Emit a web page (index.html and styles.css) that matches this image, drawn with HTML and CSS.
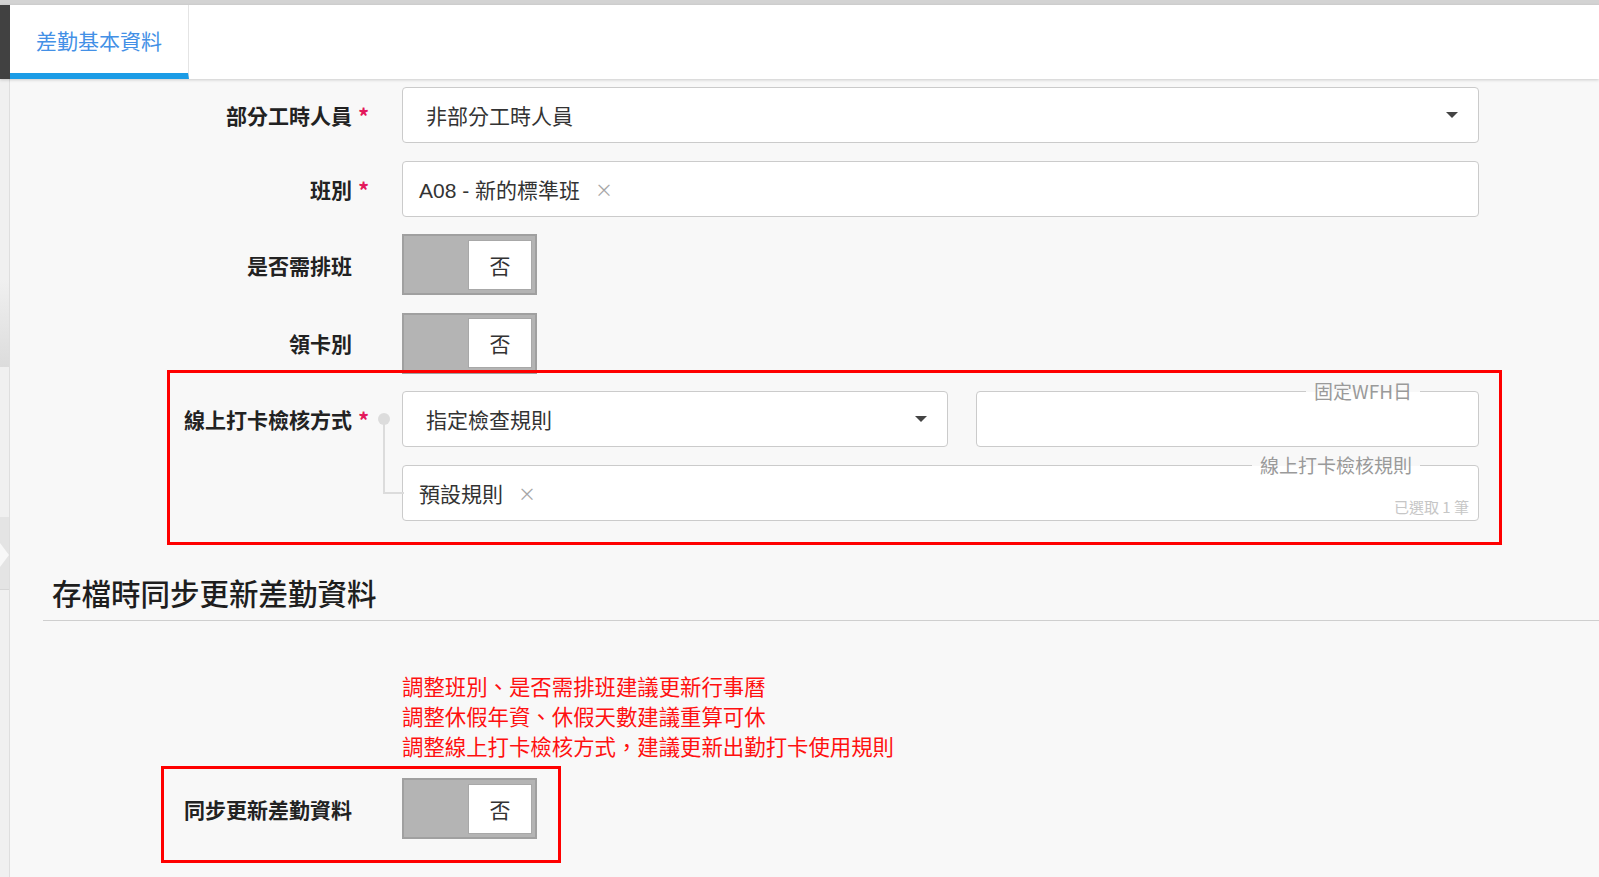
FILE: index.html
```html
<!DOCTYPE html>
<html lang="zh-Hant">
<head>
<meta charset="utf-8">
<title>差勤基本資料</title>
<link rel="stylesheet" href="styles.css">
</head>
<body>
<div class="topstrip"></div>
<header class="header">
  <div class="dark"></div>
  <nav class="tabs">
    <div class="tab active">差勤基本資料</div>
  </nav>
</header>
<div class="main">
  <aside class="edge">
    <div class="shade1"></div>
    <div class="shade2"></div>
  </aside>
  <div class="content">
    <div class="form">
      <div class="row">
        <div class="label">部分工時人員<span class="req">*</span></div>
        <div class="select"><span>非部分工時人員</span><i class="caret"></i></div>
      </div>
      <div class="row">
        <div class="label">班別<span class="req">*</span></div>
        <div class="tagbox"><span class="tag">A08 - 新的標準班</span><span class="x">×</span></div>
      </div>
      <div class="row">
        <div class="label">是否需排班</div>
        <div class="toggle"><span class="knob">否</span></div>
      </div>
      <div class="row">
        <div class="label">領卡別</div>
        <div class="toggle"><span class="knob">否</span></div>
      </div>
      <div class="group">
        <div class="label g-label">線上打卡檢核方式<span class="req">*</span></div>
        <div class="pair">
          <div class="select method"><span>指定檢查規則</span><i class="caret"></i></div>
          <div class="field wfh"><span class="legend">固定WFH日</span></div>
        </div>
        <div class="field rules">
          <span class="legend">線上打卡檢核規則</span>
          <span class="tag">預設規則</span><span class="x">×</span>
          <span class="count">已選取 1 筆</span>
        </div>
        <svg class="connector" width="28" height="84" viewBox="0 0 28 84">
          <circle cx="8" cy="8" r="6" fill="#dcdcdc"/>
          <path d="M8 8 V82 H28" fill="none" stroke="#dcdcdc" stroke-width="2"/>
        </svg>
      </div>
    </div>
    <section class="sync">
      <h2 class="sync-title">存檔時同步更新差勤資料</h2>
      <div class="notes">
        <div>調整班別、是否需排班建議更新行事曆</div>
        <div>調整休假年資、休假天數建議重算可休</div>
        <div>調整線上打卡檢核方式，建議更新出勤打卡使用規則</div>
      </div>
      <div class="row sync-row">
        <div class="label">同步更新差勤資料</div>
        <div class="toggle"><span class="knob">否</span></div>
      </div>
    </section>
  </div>
</div>
</body>
</html>
```

FILE: styles.css
```css
* { box-sizing: border-box; }

body {
  margin: 0;
  width: 1599px;
  height: 877px;
  overflow: hidden;
  background: #f8f8f8;
  font-family: "Noto Sans CJK TC", "Noto Sans", sans-serif;
  color: #333;
}

.topstrip {
  height: 5px;
  background: #d3d3d3;
}

.header {
  display: flex;
  height: 74px;
  position: relative;
  z-index: 2;
  box-shadow: 0 1px 3px rgba(0, 0, 0, 0.18);
}

.dark {
  width: 10px;
  background: #414141;
}

.tabs {
  flex: 1;
  display: flex;
  background: #fff;
}

.tab {
  width: 179px;
  height: 74px;
  display: flex;
  align-items: center;
  padding: 2px 0 0 26px;
  font-size: 21px;
  color: #4390e6;
  border-right: 1px solid #e4e4e4;
  border-bottom: 6px solid #1b9ce6;
}

.main {
  display: flex;
  height: 798px;
}

.edge {
  width: 10px;
  flex: none;
  background: #f0f0f0;
  border-right: 1px solid #dedede;
  position: relative;
}

.shade1 {
  position: absolute;
  left: 0;
  top: 200px;
  width: 9px;
  height: 88px;
  background: linear-gradient(#f0f0f0, #dcdcdc);
}

.shade2 {
  position: absolute;
  left: 0;
  top: 438px;
  width: 9px;
  height: 73px;
  background: #e4e4e4;
  border-bottom: 1px solid #d6d6d6;
}

.shade2::after {
  content: "";
  position: absolute;
  left: 0;
  top: 26px;
  border-top: 12px solid transparent;
  border-bottom: 12px solid transparent;
  border-left: 9px solid #f8f8f8;
}

.content {
  flex: 1;
  padding-top: 8px;
}

.form {
  display: flex;
  flex-direction: column;
  gap: 17.6px;
}

.row {
  display: grid;
  grid-template-columns: 392px 1077px;
  align-items: center;
}

.label {
  display: flex;
  justify-content: flex-end;
  align-items: center;
  padding-right: 50px;
  font-size: 21px;
  font-weight: 700;
  color: #222;
  white-space: nowrap;
}

.req {
  color: #e3175b;
  font-size: 22px;
  margin-left: 6px;
  margin-right: -16px;
  width: 10px;
}

.select,
.tagbox,
.field {
  height: 56px;
  background: #fff;
  border: 1px solid #cbcbcb;
  border-radius: 4px;
  display: flex;
  align-items: center;
  font-size: 21px;
  color: #333;
}

.select {
  padding: 0 20px 0 23px;
  justify-content: space-between;
}

.caret {
  width: 0;
  height: 0;
  border-left: 6px solid transparent;
  border-right: 6px solid transparent;
  border-top: 6px solid #444;
}

.tagbox {
  padding: 0 16px;
}

.tag {
  color: #333;
  font-family: "Liberation Sans", "Noto Sans CJK TC", sans-serif;
}

.x {
  margin-left: 15px;
  font-size: 18px;
  color: #a6a6a6;
}

.toggle {
  width: 135px;
  height: 61px;
  background: #b4b4b4;
  border: 2px solid #a0a0a0;
  display: flex;
  justify-content: flex-end;
  align-items: center;
  padding: 0 3px;
}

.knob {
  width: 64px;
  height: 50px;
  background: #fff;
  border: 1px solid #a8a8a8;
  display: flex;
  align-items: center;
  justify-content: center;
  font-size: 21px;
  color: #333;
}

.group {
  position: relative;
  display: grid;
  grid-template-columns: 392px 1077px;
  grid-template-rows: 56px 56px;
  row-gap: 18px;
  align-items: center;
}

.group::after {
  content: "";
  position: absolute;
  top: -21px;
  left: 157px;
  width: 1329px;
  height: 169px;
  border: 3px solid #ff0000;
  pointer-events: none;
}

.g-label {
  grid-column: 1;
  grid-row: 1;
}

.pair {
  grid-column: 2;
  grid-row: 1;
  display: flex;
  gap: 28px;
}

.method,
.wfh {
  flex: 1 1 0;
  min-width: 0;
}

.field {
  position: relative;
}

.legend {
  position: absolute;
  top: -12px;
  right: 58px;
  padding: 0 8px;
  font-size: 19px;
  line-height: 22px;
  color: #9a9a9a;
  background: linear-gradient(#f8f8f8 55%, #fff 55%);
}

.rules {
  grid-column: 2;
  grid-row: 2;
  padding: 0 9px 0 16px;
}

.count {
  margin-left: auto;
  align-self: flex-end;
  margin-bottom: 3px;
  font-size: 15px;
  color: #c6c6c6;
}

.connector {
  position: absolute;
  left: 366px;
  top: 20px;
}

.sync {
  margin-top: 51px;
}

.sync-title {
  margin: 0 0 0 33px;
  padding: 0 0 8px 9px;
  font-size: 29.5px;
  line-height: 40px;
  font-weight: 500;
  color: #1e1e1e;
  border-bottom: 1px solid #cfcfcf;
}

.notes {
  margin-top: 50px;
  padding-left: 392px;
  font-size: 21.4px;
  line-height: 30px;
  color: #ff1010;
}

.sync-row {
  margin-top: 17px;
  position: relative;
}

.sync-row::after {
  content: "";
  position: absolute;
  top: -12px;
  left: 151px;
  width: 394px;
  height: 91px;
  border: 3px solid #ff0000;
  pointer-events: none;
}
```
